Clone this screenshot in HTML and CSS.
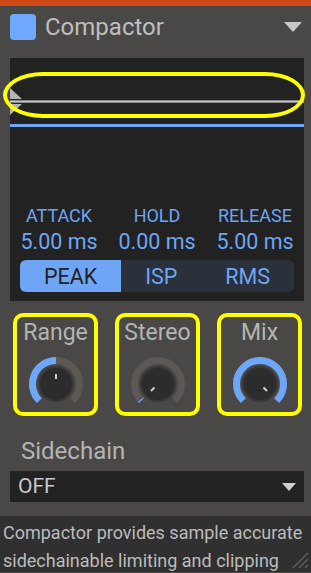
FILE: index.html
```html
<!DOCTYPE html>
<html lang="en">

<head>
    <meta charset="UTF-8">
    <meta name="viewport" content="width=device-width, initial-scale=1.0">
    <title>Compactor</title>
    <link rel="stylesheet" href="styles.css">
</head>

<body>
    <div class="top-bar"></div>

    <header class="header">
        <div class="color-chip"></div>
        <h1 class="title">Compactor</h1>
        <svg class="header-arrow" width="18" height="10" viewBox="0 0 18 10">
            <polygon points="0,0 18,0 9,10" fill="#c8c8c8" />
        </svg>
    </header>

    <section class="panel">
        <div class="meter">
            <div class="meter-line"></div>
            <svg class="meter-handle meter-handle-top" width="12" height="11" viewBox="0 0 12 11">
                <polygon points="0,0 0,11 12,11" fill="#b4b4b4" />
            </svg>
            <svg class="meter-handle meter-handle-bottom" width="12" height="11" viewBox="0 0 12 11">
                <polygon points="0,0 12,0 0,11" fill="#b4b4b4" />
            </svg>
            <div class="meter-level"></div>
            <!-- annotation -->
            <div class="mark-ellipse"></div>
        </div>

        <div class="times">
            <div class="time">
                <div class="time-label">ATTACK</div>
                <div class="time-value">5.00 ms</div>
            </div>
            <div class="time">
                <div class="time-label">HOLD</div>
                <div class="time-value">0.00 ms</div>
            </div>
            <div class="time">
                <div class="time-label">RELEASE</div>
                <div class="time-value">5.00 ms</div>
            </div>
        </div>

        <div class="modes">
            <button class="mode active">PEAK</button>
            <button class="mode">ISP</button>
            <button class="mode">RMS</button>
        </div>
    </section>

    <section class="knobs">
        <div class="knob-box">
            <div class="knob-label">Range</div>
            <svg class="knob" width="56" height="56" viewBox="0 0 56 56">
                <path d="M11.38 44.62 A23.5 23.5 0 1 1 44.62 44.62" class="knob-track" />
                <path d="M11.38 44.62 A23.5 23.5 0 0 1 28 4.5" class="knob-value" />
                <circle cx="28" cy="28" r="17" class="knob-body" />
                <line x1="28" y1="23" x2="28" y2="18" class="knob-pointer" />
            </svg>
        </div>
        <div class="knob-box">
            <div class="knob-label">Stereo</div>
            <svg class="knob" width="56" height="56" viewBox="0 0 56 56">
                <path d="M11.38 44.62 A23.5 23.5 0 1 1 44.62 44.62" class="knob-track" />
                <path d="M11.38 44.62 A23.5 23.5 0 0 1 10.6 43.7" class="knob-value" />
                <circle cx="28" cy="28" r="17" class="knob-body" />
                <line x1="24.5" y1="31.5" x2="21" y2="35" class="knob-pointer" />
            </svg>
        </div>
        <div class="knob-box">
            <div class="knob-label">Mix</div>
            <svg class="knob" width="56" height="56" viewBox="0 0 56 56">
                <path d="M11.38 44.62 A23.5 23.5 0 1 1 44.62 44.62" class="knob-track" />
                <path d="M11.38 44.62 A23.5 23.5 0 1 1 44.62 44.62" class="knob-value" />
                <circle cx="28" cy="28" r="17" class="knob-body" />
                <line x1="31.5" y1="31.5" x2="35" y2="35" class="knob-pointer" />
            </svg>
        </div>
    </section>

    <section class="sidechain">
        <div class="sidechain-label">Sidechain</div>
        <div class="select">
            <span>OFF</span>
            <svg width="14" height="8" viewBox="0 0 14 8">
                <polygon points="0,0 14,0 7,8" fill="#d0d0d0" />
            </svg>
        </div>
    </section>

    <footer class="info">
        <p>Compactor provides sample accurate sidechainable limiting and clipping</p>
        <svg class="grip" width="20" height="20" viewBox="0 0 20 20">
            <line x1="19" y1="4" x2="4" y2="19" />
            <line x1="19" y1="10" x2="10" y2="19" />
            <line x1="19" y1="16" x2="16" y2="19" />
        </svg>
    </footer>
</body>

</html>
```

FILE: styles.css
```css
body {
    font-family: Roboto, "Liberation Sans", sans-serif;
    margin: 0;
    width: 311px;
    height: 573px;
    overflow: hidden;
    background-color: #4a4846;
    color: #bdbdbd;
}

.top-bar {
    height: 6px;
    background-color: #d14a16;
}

.header {
    display: flex;
    align-items: center;
    height: 26px;
    padding: 8px 9px 18px 10px;
}

.color-chip {
    width: 26px;
    height: 26px;
    border-radius: 4px;
    background-color: #70a8ff;
}

.title {
    flex: 1;
    margin: 0 0 0 9px;
    font-size: 24px;
    font-weight: normal;
    line-height: 26px;
    color: #bebebe;
}

.panel {
    margin: 0 7px 0 10px;
    padding-bottom: 9px;
    background-color: #222;
}

.meter {
    position: relative;
    height: 148px;
}

.meter-line {
    position: absolute;
    left: 0;
    right: 0;
    top: 42px;
    height: 3px;
    background: linear-gradient(#6e6e6e, #c4c4c4 50%, #6e6e6e);
}

.meter-handle {
    position: absolute;
    left: 0;
}

.meter-handle-top {
    top: 30px;
}

.meter-handle-bottom {
    top: 46px;
}

.meter-level {
    position: absolute;
    left: 0;
    right: 0;
    top: 66px;
    height: 3px;
    background-color: #6ea6f5;
}

.mark-ellipse {
    position: absolute;
    left: -7px;
    right: -1px;
    top: 14px;
    height: 38px;
    border: 4px solid #ffff00;
    border-radius: 40px / 23px;
}

.times {
    display: grid;
    grid-template-columns: 1fr 1fr 1fr;
    text-align: center;
    color: #6ea6f5;
}

.time-label {
    font-size: 18px;
    line-height: 20px;
}

.time-value {
    margin-top: 4px;
    font-size: 21.5px;
    line-height: 24px;
}

.modes {
    display: flex;
    height: 32px;
    margin: 6px 10px 0 10px;
    border-radius: 6px;
    overflow: hidden;
    background-color: #2b313b;
}

.mode {
    flex: 1 1 auto;
    padding: 0;
    border: none;
    background: none;
    font-family: inherit;
    font-size: 21.5px;
    color: #6ea6f5;
}

.mode.active {
    background-color: #6ea6f5;
    color: #222;
}

.knobs {
    display: flex;
    justify-content: space-between;
    padding: 12px 9px 0 13px;
}

.knob-box {
    display: flex;
    flex-direction: column;
    align-items: center;
    width: 77px;
    height: 92px;
    padding-top: 3px;
    border: 4px solid #ffff00;
    border-radius: 10px;
}

.knob-label {
    font-size: 23px;
    line-height: 26px;
    color: #b4b4b4;
}

.knob {
    flex-shrink: 0;
    margin-top: 10px;
}

.knob-track,
.knob-value {
    fill: none;
    stroke-width: 7;
}

.knob-track {
    stroke: #5b5856;
}

.knob-value {
    stroke: #6ea6f8;
}

.knob-body {
    fill: #2c2c2c;
    stroke: #383838;
    stroke-width: 2;
}

.knob-pointer {
    stroke: #d0d0d0;
    stroke-width: 2;
}

.sidechain {
    padding: 21px 7px 0 10px;
}

.sidechain-label {
    padding-left: 11px;
    font-size: 24px;
    line-height: 28px;
    color: #b4b4b4;
}

.select {
    display: flex;
    align-items: center;
    justify-content: space-between;
    height: 31px;
    margin-top: 6px;
    padding: 0 8px 0 8px;
    background-color: #222;
    font-size: 21px;
    line-height: 31px;
    color: #c8c8c8;
}

.info {
    position: relative;
    height: 53px;
    margin-top: 14px;
    padding: 3px 3px 0 3px;
    background-color: #303030;
}

.info p {
    margin: 0;
    font-size: 18px;
    line-height: 28px;
    color: #bcbcbc;
}

.grip {
    position: absolute;
    right: 2px;
    bottom: 3px;
}

.grip line {
    stroke: #5e5e5e;
    stroke-width: 1.5;
}
```
